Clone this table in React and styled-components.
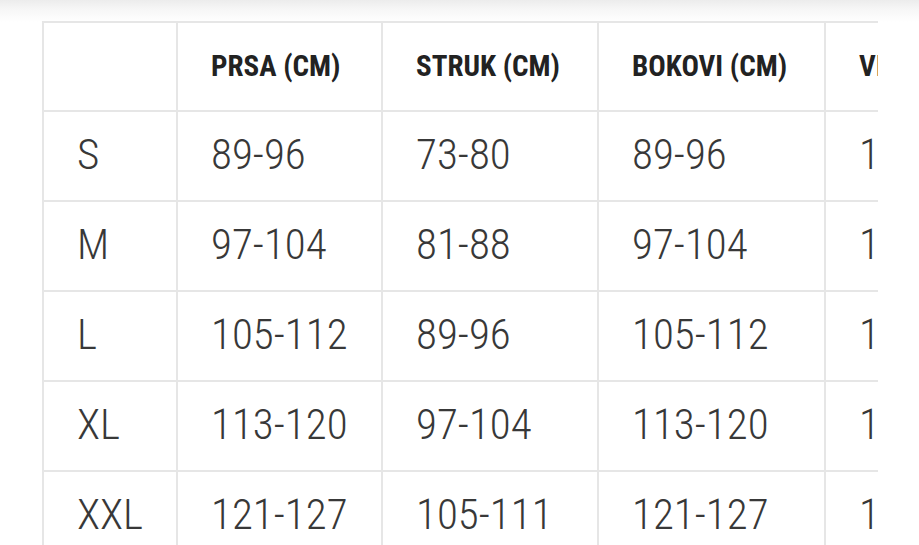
import React from 'react'
import styled, { createGlobalStyle } from 'styled-components'

const GlobalStyle = createGlobalStyle`
  html, body {
    margin: 0;
    padding: 0;
    background: #fff;
  }
  body {
    font-family: Roboto, "Liberation Sans", sans-serif;
    overflow: hidden;
  }
`

const columns = ['', 'PRSA (CM)', 'STRUK (CM)', 'BOKOVI (CM)', 'VISINA (CM)']
const widths = [134, 205, 216, 227, 200]

const rows = [
  ['S', '89-96', '73-80', '89-96', '170-176'],
  ['M', '97-104', '81-88', '97-104', '176-182'],
  ['L', '105-112', '89-96', '105-112', '182-188'],
  ['XL', '113-120', '97-104', '113-120', '188-194'],
  ['XXL', '121-127', '105-111', '121-127', '194-200'],
]

const App = () => {
  return (
    <Page>
      <GlobalStyle />
      <TopShade />
      <ScrollBox>
        <Table>
          <colgroup>
            {widths.map((w, i) => (
              <col key={i} style={{ width: w }} />
            ))}
          </colgroup>
          <thead>
            <HeadRow>
              {columns.map((c, i) => (
                <HeadCell key={i}>{c}</HeadCell>
              ))}
            </HeadRow>
          </thead>
          <tbody>
            {rows.map((r) => (
              <BodyRow key={r[0]}>
                {r.map((v, i) => (
                  <Cell key={i}>{v}</Cell>
                ))}
              </BodyRow>
            ))}
          </tbody>
        </Table>
      </ScrollBox>
    </Page>
  )
}

export default App

const Page = styled.div`
  position: relative;
  width: 919px;
  height: 545px;
  overflow: hidden;
  background: #fff;
  padding: 21px 41px 0 42px;
  box-sizing: border-box;
`

const TopShade = styled.div`
  position: absolute;
  top: 0;
  left: 0;
  right: 0;
  height: 22px;
  background: linear-gradient(to bottom, #ececec 0%, #f6f6f6 40%, #fff 100%);
`

const ScrollBox = styled.div`
  position: relative;
  width: 100%;
  overflow: hidden;
`

const Table = styled.table`
  border-collapse: collapse;
  table-layout: fixed;
  width: 982px;
  font-family: Roboto, "Liberation Sans", sans-serif;
  font-stretch: 75%;
`

const HeadRow = styled.tr`
  height: 89px;
`

const BodyRow = styled.tr`
  height: 90px;
`

const HeadCell = styled.th`
  border: 2px solid #e6e6e6;
  padding: 0 0 2px 33px;
  text-align: left;
  font-size: 29px;
  font-stretch: 79%;
  font-weight: 700;
  color: #222;
  white-space: nowrap;
  vertical-align: middle;
`

const Cell = styled.td`
  border: 2px solid #e6e6e6;
  padding: 0 0 4px 33px;
  text-align: left;
  font-size: 43px;
  font-weight: 300;
  color: #383838;
  white-space: nowrap;
  vertical-align: middle;
`
